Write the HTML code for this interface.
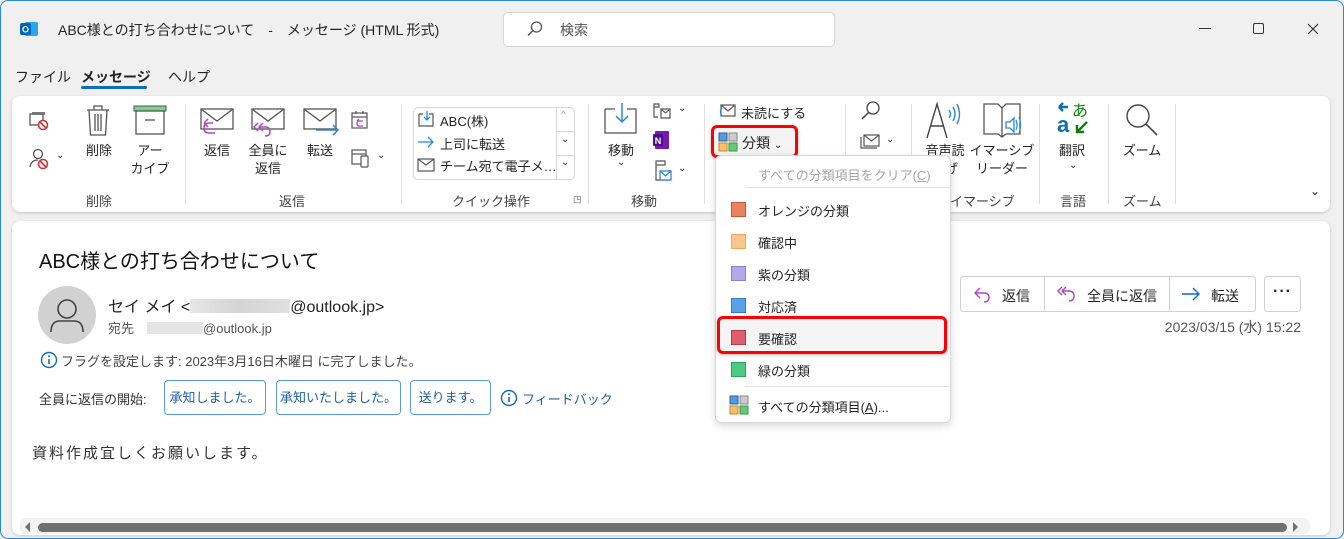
<!DOCTYPE html>
<html><head><meta charset="utf-8"><style>
*{margin:0;padding:0;box-sizing:border-box}
body{width:1344px;height:539px;overflow:hidden;background:#f0f0f0;font-family:"Liberation Sans","Noto Sans CJK JP",sans-serif;color:#242424;position:relative;font-size:13px}
.a{position:absolute;white-space:nowrap}
.sep{position:absolute;top:104px;width:1px;height:100px;background:#e1e1e1}
.gl{position:absolute;top:191px;font-size:13px;color:#424242}
.lbl{position:absolute;font-size:13px;text-align:center;line-height:18px;color:#242424}
.mi{position:absolute;left:758px;font-size:13px}
.sq{position:absolute;left:731px;width:15px;height:15px}
.qb{position:absolute;top:380px;height:35px;border:1px solid #5b9bd5;border-radius:4px;color:#1f5fa8;font-size:13px;line-height:33px;text-align:center;background:#fff}
</style></head><body>
<div class="a" style="left:0;top:0;width:1344px;height:539px;border:1px solid #2b88d8;border-radius:8px;pointer-events:none;z-index:9"></div>
<svg class="a" style="left:19px;top:19px" width="20" height="20" viewBox="0 0 20 20"><rect x="6" y="3" width="13" height="14" rx="2" fill="#28a8ea"/><rect x="1" y="4" width="11" height="12" rx="2" fill="#0364b8"/><text x="6.5" y="13.5" font-size="9" fill="#fff" text-anchor="middle" font-weight="bold" font-family="Liberation Sans">O</text></svg>
<div class="a" style="left:58px;top:20px;font-size:14px">ABC様との打ち合わせについて　-　メッセージ (HTML 形式)</div>
<div class="a" style="left:503px;top:12px;width:332px;height:35px;background:#fff;border:1px solid #d6d6d6;border-radius:5px"></div>
<svg class="a" style="left:526px;top:20px" width="18" height="18" viewBox="0 0 18 18"><circle cx="10.5" cy="7" r="5" fill="none" stroke="#555" stroke-width="1.3"/><path d="M7 10.5 L2 15.5" stroke="#555" stroke-width="1.5"/></svg>
<div class="a" style="left:560px;top:20px;font-size:14px;color:#555">検索</div>
<div class="a" style="left:1199px;top:28px;width:12px;height:1px;background:#333"></div>
<div class="a" style="left:1253px;top:23px;width:11px;height:11px;border:1.3px solid #333;border-radius:2px"></div>
<svg class="a" style="left:1307px;top:23px" width="12" height="12"><path d="M1 1L11 11M11 1L1 11" stroke="#333" stroke-width="1.2"/></svg>
<div class="a" style="left:15px;top:67px;font-size:14px">ファイル</div>
<div class="a" style="left:81px;top:67px;font-size:14px;font-weight:bold">メッセージ</div>
<div class="a" style="left:81px;top:86px;width:66px;height:3px;background:#0f6cbd;border-radius:2px"></div>
<div class="a" style="left:168px;top:67px;font-size:14px">ヘルプ</div>
<div class="a" style="left:12px;top:96px;width:1318px;height:116px;background:#fff;border-radius:8px;box-shadow:0 1px 3px rgba(0,0,0,.18)"></div>
<div class="sep" style="left:185px"></div><div class="sep" style="left:401px"></div><div class="sep" style="left:588px"></div><div class="sep" style="left:704px"></div><div class="sep" style="left:845px"></div><div class="sep" style="left:911px"></div><div class="sep" style="left:1039px"></div><div class="sep" style="left:1108px"></div><div class="sep" style="left:1175px"></div>
<svg class="a" style="left:28px;top:110px" width="22" height="22" viewBox="0 0 22 22"><rect x="2" y="4" width="13" height="11" fill="none" stroke="#555" stroke-width="1.3"/><rect x="4" y="2" width="13" height="3" fill="#777"/><circle cx="15" cy="15" r="4.5" fill="#fff" stroke="#d13438" stroke-width="1.6"/><path d="M12 12L18 18" stroke="#d13438" stroke-width="1.6"/></svg>
<svg class="a" style="left:28px;top:147px" width="24" height="24" viewBox="0 0 24 24"><circle cx="10" cy="7" r="4.5" fill="none" stroke="#555" stroke-width="1.3"/><path d="M2 20 Q3 13 10 13" fill="none" stroke="#555" stroke-width="1.3"/><circle cx="15" cy="17" r="4.5" fill="#fff" stroke="#d13438" stroke-width="1.6"/><path d="M12 14L18 20" stroke="#d13438" stroke-width="1.6"/></svg>
<div class="a" style="left:56px;top:150px;font-size:10px">⌄</div>
<svg class="a" style="left:84px;top:103px" width="28" height="34" viewBox="0 0 28 34"><path d="M3 7H25M10 7V3H18V7M5 7L6.5 32H21.5L23 7M11 11V28M14 11V28M17 11V28" fill="none" stroke="#555" stroke-width="1.3"/></svg>
<div class="lbl" style="left:82px;top:142px;width:34px">削除</div>
<svg class="a" style="left:133px;top:105px" width="34" height="30" viewBox="0 0 34 30"><rect x="1" y="1" width="32" height="5" fill="#7fcf8f" stroke="#555" stroke-width="1"/><rect x="3" y="6" width="28" height="23" fill="none" stroke="#555" stroke-width="1.3"/><path d="M12 15H22" stroke="#555" stroke-width="1.3"/></svg>
<div class="lbl" style="left:130px;top:142px;width:40px">アー<br>カイブ</div>
<div class="gl" style="left:86px">削除</div>
<svg class="a" style="left:199px;top:107px" width="36" height="32" viewBox="0 0 36 32"><rect x="2" y="2" width="32" height="20" fill="none" stroke="#555" stroke-width="1.3"/><path d="M2 2L18 14L34 2" fill="none" stroke="#555" stroke-width="1.3"/><path d="M14 20H10Q5 20 5 25Q5 30 10 30H16M5 20L9 16M5 20L9 24" fill="none" stroke="#b146c2" stroke-width="1.5" transform="translate(0,-4)"/></svg>
<div class="lbl" style="left:199px;top:142px;width:36px">返信</div>
<svg class="a" style="left:250px;top:107px" width="36" height="32" viewBox="0 0 36 32"><rect x="2" y="2" width="32" height="20" fill="none" stroke="#555" stroke-width="1.3"/><path d="M2 2L18 14L34 2" fill="none" stroke="#555" stroke-width="1.3"/><path d="M8 16L4 20L8 24M13 16L9 20L13 24M9 20H16Q20 20 20 25Q20 29 15 29" fill="none" stroke="#b146c2" stroke-width="1.5"/></svg>
<div class="lbl" style="left:246px;top:142px;width:44px">全員に<br>返信</div>
<svg class="a" style="left:302px;top:107px" width="38" height="32" viewBox="0 0 38 32"><rect x="2" y="2" width="32" height="20" fill="none" stroke="#555" stroke-width="1.3"/><path d="M2 2L18 14L34 2" fill="none" stroke="#555" stroke-width="1.3"/><path d="M14 23H36M31 18L36 23L31 28" fill="none" stroke="#2b88d8" stroke-width="1.5"/></svg>
<div class="lbl" style="left:302px;top:142px;width:36px">転送</div>
<svg class="a" style="left:350px;top:110px" width="20" height="22" viewBox="0 0 20 22"><rect x="2" y="3" width="15" height="15" fill="none" stroke="#555" stroke-width="1.2"/><path d="M2 7H17M6 1V4M13 1V4" stroke="#555" stroke-width="1.2"/><path d="M13 11H9Q7 11 7 13.5Q7 16 9 16H13M7 11L9 9" fill="none" stroke="#b146c2" stroke-width="1.3"/></svg>
<svg class="a" style="left:350px;top:147px" width="22" height="22" viewBox="0 0 22 22"><rect x="2" y="3" width="14" height="14" fill="none" stroke="#555" stroke-width="1.2"/><path d="M2 7H16" stroke="#555" stroke-width="1.2"/><rect x="11" y="9" width="7" height="11" rx="1" fill="#fff" stroke="#555" stroke-width="1.2"/></svg>
<div class="a" style="left:377px;top:150px;font-size:10px">⌄</div>
<div class="gl" style="left:279px">返信</div>
<div class="a" style="left:413px;top:107px;width:162px;height:73px;border:1px solid #d6d6d6;border-radius:5px"></div>
<div class="a" style="left:556px;top:107px;width:1px;height:73px;background:#d6d6d6"></div>
<div class="a" style="left:556px;top:131px;width:19px;height:1px;background:#d6d6d6"></div>
<div class="a" style="left:556px;top:155px;width:19px;height:1px;background:#d6d6d6"></div>
<div class="a" style="left:561px;top:110px;font-size:10px;color:#aaa">^</div>
<div class="a" style="left:561px;top:134px;font-size:10px">⌄</div>
<div class="a" style="left:561px;top:157px;font-size:10px">⌄</div>
<svg class="a" style="left:417px;top:110px" width="18" height="18" viewBox="0 0 18 18"><path d="M2 4V16H16V4H12M2 4H6" fill="none" stroke="#555" stroke-width="1.2"/><path d="M10 1V10M7 7L10 10L13 7" fill="none" stroke="#2b88d8" stroke-width="1.3"/></svg>
<div class="a" style="left:440px;top:111px;font-size:13px">ABC(株)</div>
<svg class="a" style="left:417px;top:135px" width="18" height="14"><path d="M1 7H16M11 2L16 7L11 12" fill="none" stroke="#2b88d8" stroke-width="1.3"/></svg>
<div class="a" style="left:440px;top:134px;font-size:13px">上司に転送</div>
<svg class="a" style="left:417px;top:158px" width="18" height="14"><rect x="1" y="1" width="16" height="12" fill="none" stroke="#555" stroke-width="1.2"/><path d="M1 1L9 7L17 1" fill="none" stroke="#555" stroke-width="1.2"/></svg>
<div class="a" style="left:440px;top:156px;font-size:13px">チーム宛て電子メ…</div>
<div class="gl" style="left:452px">クイック操作</div>
<div class="a" style="left:573px;top:194px;font-size:9px;color:#555">◳</div>
<svg class="a" style="left:603px;top:101px" width="36" height="34" viewBox="0 0 36 34"><path d="M2 8V32H33V8H24M2 8H12" fill="none" stroke="#555" stroke-width="1.3"/><path d="M19 2V21M13 15L19 21L25 15" fill="none" stroke="#2b88d8" stroke-width="1.5"/></svg>
<div class="lbl" style="left:602px;top:142px;width:38px">移動</div>
<div class="a" style="left:617px;top:157px;font-size:10px">⌄</div>
<svg class="a" style="left:652px;top:102px" width="20" height="18"><path d="M2 2H7V5H2ZM2 5V15H6M9 7H18V16H9Z" fill="none" stroke="#555" stroke-width="1.2"/><path d="M9 7L13.5 11L18 7" fill="none" stroke="#555" stroke-width="1.1"/></svg>
<div class="a" style="left:678px;top:103px;font-size:10px">⌄</div>
<svg class="a" style="left:652px;top:130px" width="18" height="20"><rect x="3" y="1" width="14" height="18" rx="1" fill="#7719aa"/><rect x="1" y="4" width="10" height="12" rx="1" fill="#4d0f8a"/><text x="6" y="14" font-size="9" fill="#fff" font-weight="bold" text-anchor="middle" font-family="Liberation Sans">N</text></svg>
<svg class="a" style="left:653px;top:160px" width="20" height="22"><path d="M3 1H12V5H3ZM3 5V20H17V10" fill="none" stroke="#555" stroke-width="1.2"/><rect x="7" y="11" width="11" height="9" fill="#fff" stroke="#2b88d8" stroke-width="1.3"/><path d="M7 11L12.5 16L18 11" fill="none" stroke="#2b88d8" stroke-width="1.2"/></svg>
<div class="a" style="left:678px;top:163px;font-size:10px">⌄</div>
<div class="gl" style="left:631px">移動</div>
<svg class="a" style="left:718px;top:103px" width="18" height="16"><rect x="3" y="2" width="14" height="11" fill="none" stroke="#555" stroke-width="1.2"/><path d="M3 2L10 8L17 2" fill="none" stroke="#555" stroke-width="1.2"/><path d="M4 5Q1 9 4 13" fill="none" stroke="#2b88d8" stroke-width="1.3"/></svg>
<div class="a" style="left:741px;top:103px;font-size:13px">未読にする</div>
<div class="a" style="left:711px;top:125px;width:87px;height:33px;border:3px solid #f00;border-radius:6px;background:#f3f3f3;box-shadow:0 1px 3px rgba(0,0,0,.3)"></div>
<svg class="a" style="left:718px;top:132px" width="20" height="20"><rect x="1" y="1" width="8" height="8" fill="#5b9bd5" stroke="#2266aa"/><rect x="11" y="1" width="8" height="8" fill="#ccc" stroke="#888"/><rect x="1" y="11" width="8" height="8" fill="#f4c06b" stroke="#c88a20"/><rect x="11" y="11" width="8" height="8" fill="#6cc77b" stroke="#2f9a45"/></svg>
<div class="a" style="left:742px;top:133px;font-size:14px">分類 <span style="font-size:10px">⌄</span></div>
<svg class="a" style="left:860px;top:100px" width="22" height="22"><circle cx="13" cy="8" r="6" fill="none" stroke="#444" stroke-width="1.3"/><path d="M9 12L2 19" stroke="#444" stroke-width="1.5"/></svg>
<svg class="a" style="left:860px;top:134px" width="22" height="16"><path d="M1 3V14H17" fill="none" stroke="#555" stroke-width="1.2"/><rect x="4" y="1" width="15" height="11" fill="none" stroke="#555" stroke-width="1.2"/><path d="M4 1L11.5 7L19 1" fill="none" stroke="#555" stroke-width="1.2"/></svg>
<div class="a" style="left:886px;top:134px;font-size:10px">⌄</div>
<svg class="a" style="left:925px;top:100px" width="40" height="40"><path d="M2 38L12 4L22 38M6 26H18" fill="none" stroke="#444" stroke-width="1.4"/><path d="M24 10Q27 14 24 18M28 7Q32 14 28 21M32 4Q37 14 32 24" fill="none" stroke="#2b88d8" stroke-width="1.4"/></svg>
<div class="lbl" style="left:920px;top:142px;width:50px">音声読<br>上げ</div>
<svg class="a" style="left:982px;top:100px" width="42" height="40"><path d="M2 4H16L20 8L24 4H38V34H24L20 37L16 34H2ZM20 8V37" fill="none" stroke="#555" stroke-width="1.3"/><path d="M24 22H28L32 18V32L28 28H24Z" fill="#fff" stroke="#2b88d8" stroke-width="1.3"/><path d="M34 20Q36 25 34 30M37 17Q40 25 37 33" fill="none" stroke="#2b88d8" stroke-width="1.2"/></svg>
<div class="lbl" style="left:966px;top:142px;width:72px;white-space:nowrap">イマーシブ<br>リーダー</div>
<div class="gl" style="left:950px">イマーシブ</div>
<svg class="a" style="left:1055px;top:100px" width="36" height="38"><text x="2" y="32" font-size="22" fill="#0f6cbd" font-weight="bold" font-family="Liberation Sans">a</text><path d="M4 7H13M4 7L8 3M4 7L8 11" fill="none" stroke="#0f6cbd" stroke-width="2.4"/><text x="17" y="16" font-size="16" fill="#107c10" font-family="Noto Sans CJK JP">あ</text><path d="M32 22L22 32M22 25V32H29" fill="none" stroke="#107c10" stroke-width="2.4"/></svg>
<div class="lbl" style="left:1052px;top:142px;width:40px">翻訳</div>
<div class="a" style="left:1069px;top:160px;font-size:10px">⌄</div>
<div class="gl" style="left:1060px">言語</div>
<svg class="a" style="left:1124px;top:102px" width="36" height="36"><circle cx="14" cy="14" r="11" fill="none" stroke="#444" stroke-width="1.4"/><path d="M22 22L33 33" stroke="#444" stroke-width="1.6"/></svg>
<div class="lbl" style="left:1120px;top:142px;width:44px">ズーム</div>
<div class="gl" style="left:1123px">ズーム</div>
<div class="a" style="left:1310px;top:184px;font-size:12px">⌄</div>
<div class="a" style="left:12px;top:221px;width:1318px;height:314px;background:#fff;border-radius:8px;box-shadow:0 1px 3px rgba(0,0,0,.15)"></div>
<div class="a" style="left:39px;top:245px;font-size:20px;color:#111">ABC様との打ち合わせについて</div>
<div class="a" style="left:38px;top:286px;width:58px;height:58px;border-radius:50%;background:#d1d1d1"></div>
<svg class="a" style="left:38px;top:286px" width="58" height="58"><circle cx="29" cy="23" r="9" fill="none" stroke="#444" stroke-width="1.6"/><path d="M13 46Q13 35 22 35H36Q45 35 45 46" fill="none" stroke="#444" stroke-width="1.6"/></svg>
<div class="a" style="left:108px;top:293px;font-size:16px">セイ メイ &lt;<span style="display:inline-block;width:100px;height:14px;background:linear-gradient(90deg,#e6e6e6,#d4d4d4,#e0e0e0);vertical-align:-1px"></span>@outlook.jp&gt;</div>
<div class="a" style="left:108px;top:318px;font-size:13px;color:#555">宛先　<span style="display:inline-block;width:56px;height:12px;background:#e4e4e4;vertical-align:-1px"></span>@outlook.jp</div>
<svg class="a" style="left:40px;top:351px" width="18" height="18"><circle cx="9" cy="9" r="7.5" fill="none" stroke="#0f6cbd" stroke-width="1.4"/><path d="M9 8V13" stroke="#0f6cbd" stroke-width="1.6"/><circle cx="9" cy="5.3" r="1" fill="#0f6cbd"/></svg>
<div class="a" style="left:61px;top:351px;font-size:13px;color:#444">フラグを設定します:  2023年3月16日木曜日 に完了しました。</div>
<div class="a" style="left:39px;top:389px;font-size:13px;color:#333">全員に返信の開始:</div>
<div class="qb" style="left:164px;width:102px">承知しました。</div>
<div class="qb" style="left:276px;width:125px">承知いたしました。</div>
<div class="qb" style="left:410px;width:81px">送ります。</div>
<svg class="a" style="left:500px;top:389px" width="18" height="18"><circle cx="9" cy="9" r="7.5" fill="none" stroke="#0f6cbd" stroke-width="1.4"/><path d="M9 8V13" stroke="#0f6cbd" stroke-width="1.6"/><circle cx="9" cy="5.3" r="1" fill="#0f6cbd"/></svg>
<div class="a" style="left:522px;top:389px;font-size:13px;color:#1f5fa8">フィードバック</div>
<div class="a" style="left:32px;top:442px;font-size:15px;letter-spacing:2px;color:#333">資料作成宜しくお願いします。</div>
<div class="a" style="left:960px;top:276px;width:296px;height:36px;border:1px solid #d1d1d1;border-radius:4px"></div>
<div class="a" style="left:1044px;top:276px;width:1px;height:36px;background:#d1d1d1"></div>
<div class="a" style="left:1169px;top:276px;width:1px;height:36px;background:#d1d1d1"></div>
<svg class="a" style="left:972px;top:285px" width="20" height="18"><path d="M8 3L3 8L8 13M3 8H12Q17 8 17 12.5Q17 17 12 17" fill="none" stroke="#b146c2" stroke-width="1.4"/></svg>
<div class="a" style="left:1002px;top:286px;font-size:14px">返信</div>
<svg class="a" style="left:1056px;top:285px" width="22" height="18"><path d="M6 2L2 6L6 10M10 2L6 6L10 10M6 6H13Q18 6 18 11Q18 16 13 16" fill="none" stroke="#b146c2" stroke-width="1.4"/></svg>
<div class="a" style="left:1087px;top:286px;font-size:14px">全員に返信</div>
<svg class="a" style="left:1181px;top:286px" width="20" height="16"><path d="M1 8H18M12 2L18 8L12 14" fill="none" stroke="#0f6cbd" stroke-width="1.4"/></svg>
<div class="a" style="left:1211px;top:286px;font-size:14px">転送</div>
<div class="a" style="left:1264px;top:276px;width:37px;height:36px;border:1px solid #d1d1d1;border-radius:4px;text-align:center;line-height:30px;font-size:16px;font-weight:bold;letter-spacing:1px">···</div>
<div class="a" style="left:1143px;top:317px;width:158px;text-align:right;font-size:14px;color:#555">2023/03/15 (水) 15:22</div>
<div class="a" style="left:20px;top:518px;width:1290px;height:16px;background:#f3f3f3;border-radius:6px"></div>
<div class="a" style="left:38px;top:523px;width:1249px;height:9px;background:#707070;border-radius:5px"></div>
<div class="a" style="left:25px;top:522px;width:0;height:0;border:5px solid transparent;border-right:5px solid #707070;border-left:0"></div>
<div class="a" style="left:1293px;top:522px;width:0;height:0;border:5px solid transparent;border-left:5px solid #707070;border-right:0"></div>
<div class="a" style="left:715px;top:155px;width:236px;height:268px;background:#fff;border:1px solid #d6d6d6;border-radius:6px;box-shadow:0 3px 8px rgba(0,0,0,.15)"></div>
<div class="mi" style="top:165px;color:#a6a6a6">すべての分類項目をクリア(<u>C</u>)</div>
<div class="a" style="left:745px;top:187px;width:205px;height:1px;background:#e1e1e1"></div>
<div class="sq" style="top:202px;background:#e8825f;border:1px solid #c9582f"></div><div class="mi" style="top:201px">オレンジの分類</div>
<div class="sq" style="top:234px;background:#fcc78e;border:1px solid #f2a85c"></div><div class="mi" style="top:233px">確認中</div>
<div class="sq" style="top:266px;background:#b4a8ea;border:1px solid #8e80d9"></div><div class="mi" style="top:265px">紫の分類</div>
<div class="sq" style="top:298px;background:#5aa2e8;border:1px solid #2e7fcf"></div><div class="mi" style="top:297px">対応済</div>
<div class="a" style="left:717px;top:316px;width:230px;height:38px;border:3px solid #f00;border-radius:6px;background:#f5f5f5;box-shadow:0 1px 3px rgba(0,0,0,.3)"></div>
<div class="sq" style="top:330px;background:#df5d6c;border:1px solid #b83a4a"></div><div class="mi" style="top:329px">要確認</div>
<div class="sq" style="top:362px;background:#4ec982;border:1px solid #27a35d"></div><div class="mi" style="top:361px">緑の分類</div>
<div class="a" style="left:745px;top:386px;width:205px;height:1px;background:#e1e1e1"></div>
<svg class="a" style="left:729px;top:395px" width="20" height="20"><rect x="1" y="1" width="8" height="8" fill="#5b9bd5" stroke="#2266aa"/><rect x="11" y="1" width="8" height="8" fill="#ccc" stroke="#888"/><rect x="1" y="11" width="8" height="8" fill="#f4c06b" stroke="#c88a20"/><rect x="11" y="11" width="8" height="8" fill="#6cc77b" stroke="#2f9a45"/></svg>
<div class="mi" style="top:397px">すべての分類項目(<u>A</u>)...</div>
</body></html>
